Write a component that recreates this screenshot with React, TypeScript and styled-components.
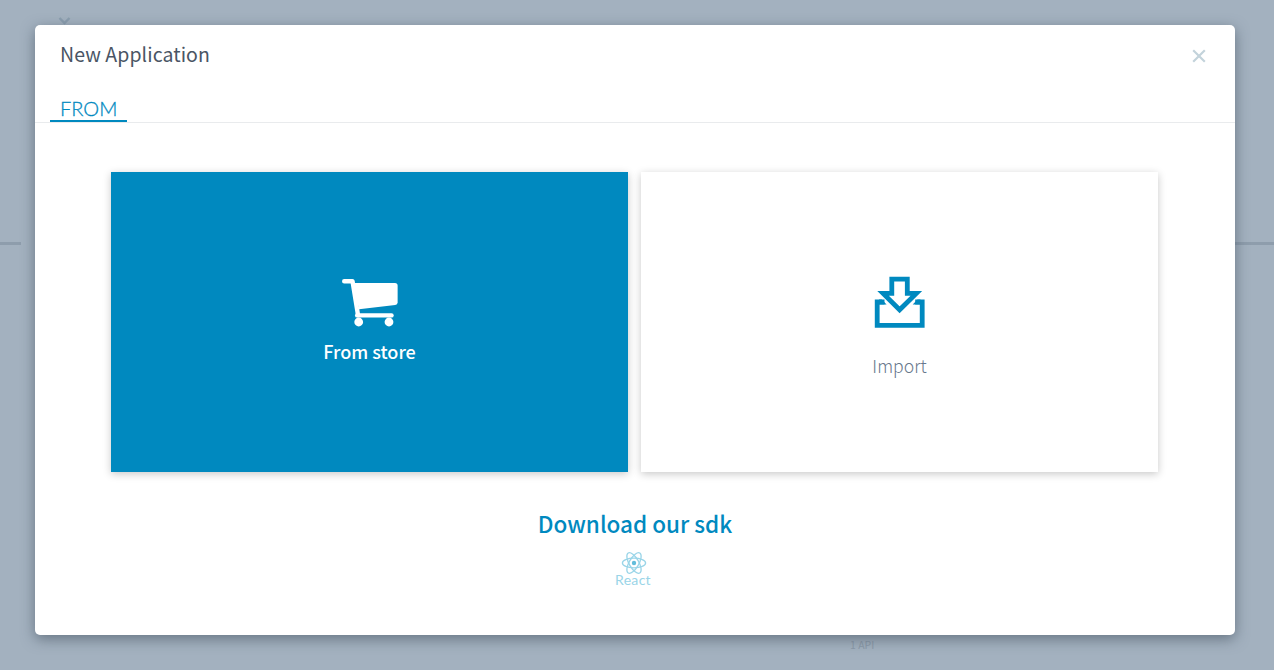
import React from "react";
import styled, { createGlobalStyle } from "styled-components";

const sans = `"Noto Sans CJK SC", "Noto Sans", sans-serif`;
const blue = "#0089bf";

const GlobalStyle = createGlobalStyle`
  *, *::before, *::after { box-sizing: border-box; }
  body { margin: 0; background: #a3b1bf; font-family: ${sans}; }
`;

const Page = styled.div`
  height: 670px;
  overflow: hidden;
  position: relative;
  display: flex;
  flex-direction: column;
`;

const PageHeader = styled.div`
  height: 242px;
  padding: 16px 0 0 58px;
  svg { display: block; }
`;

const Divider = styled.div`
  height: 3px;
  flex: none;
  background: linear-gradient(90deg, #8e9dac 21px, transparent 21px, transparent 1235px, #8e9dac 1235px);
`;

const PageFooter = styled.div`
  margin-top: auto;
  padding: 0 0 18px 850px;
  font-size: 10.5px;
  line-height: 14px;
  color: #8b99a8;
`;

const Overlay = styled.div`
  position: absolute;
  inset: 0;
  padding: 25px 39px 35px 35px;
`;

const Modal = styled.section`
  height: 610px;
  display: flex;
  flex-direction: column;
  background: #fff;
  border-radius: 5px;
  box-shadow: 0 4px 14px rgba(70, 84, 98, 0.65);
`;

const Header = styled.header`
  height: 73px;
  display: flex;
  justify-content: space-between;
  align-items: flex-start;
  padding: 14px 29px 0 25px;
`;

const Title = styled.h1`
  margin: 0;
  font-size: 19.5px;
  line-height: 30px;
  font-weight: 400;
  letter-spacing: 0.08px;
  color: #4a5564;
`;

const CloseButton = styled.button`
  margin-top: 10px;
  width: 14px;
  height: 14px;
  padding: 0;
  border: 0;
  background: none;
  svg { display: block; }
`;

const Tabs = styled.nav`
  height: 25px;
  padding-left: 15px;
  border-bottom: 1px solid #e9ebed;
`;

const Tab = styled.div`
  width: 77px;
  height: 24px;
  padding-left: 10px;
  border-bottom: 2px solid ${blue};
  color: ${blue};
  font-family: Lato, sans-serif;
  font-weight: 300;
  font-size: 20px;
  line-height: 20px;
  -webkit-text-stroke: 0.3px ${blue};
`;

const Choices = styled.div`
  display: flex;
  gap: 13px;
  padding: 49px 77px 0 76px;
`;

const Card = styled.div<{ $active?: boolean }>`
  flex: 1;
  height: 300px;
  display: flex;
  flex-direction: column;
  align-items: center;
  padding-top: ${(p) => (p.$active ? 106 : 104)}px;
  background: ${(p) => (p.$active ? blue : "#fff")};
  box-shadow: 0 2px 8px rgba(0, 0, 0, 0.22);
  svg { display: block; flex: none; }
`;

const CardLabel = styled.span<{ $active?: boolean }>`
  margin-top: ${(p) => (p.$active ? 9 : 22)}px;
  font-size: ${(p) => (p.$active ? 18 : 17.6)}px;
  line-height: 28px;
  font-weight: ${(p) => (p.$active ? 500 : 300)};
  color: ${(p) => (p.$active ? "#fff" : "#68788c")};
`;

const Sdk = styled.div`
  display: flex;
  flex-direction: column;
  align-items: center;
`;

const SdkTitle = styled.h2`
  margin: 32px 0 0;
  font-size: 22.5px;
  line-height: 38px;
  font-weight: 500;
  color: ${blue};
`;

const SdkItem = styled.div`
  margin-top: 9px;
  display: flex;
  flex-direction: column;
  align-items: center;
  margin-right: 4px;
  color: #9ad5e8;
  svg { display: block; margin-left: 2px; }
`;

const SdkName = styled.span`
  margin-top: -2px;
  font-family: Lato, sans-serif;
  font-size: 14px;
  line-height: 14px;
  letter-spacing: 0.3px;
`;

const CartIcon = () => (
  <svg width="58" height="50" viewBox="0 0 58 50" fill="none">
    <path d="M3.200 3.200H11.500L17 37" stroke="#fff" strokeWidth="4.400" strokeLinecap="round" strokeLinejoin="round" />
    <path d="M12 5H54q2.600 0 2.600 2.600V24.500q0 2.200-2.400 2.600L18 31.200Z" fill="#fff" />
    <path d="M16.200 37.400H50.500" stroke="#fff" strokeWidth="4.400" strokeLinecap="round" />
    <circle cx="17.700" cy="44" r="4.400" fill="#fff" />
    <circle cx="48" cy="44" r="4.400" fill="#fff" />
  </svg>
);

const ImportIcon = () => (
  <svg width="52" height="54" viewBox="0 0 52 54" fill="none" stroke={blue} strokeWidth="4.800">
    <path d="M17.800 3.200H33.300V17.400H42.300L25.600 33.800L9.100 17.400H17.800Z" />
    <path d="M10.500 26H3.200V49.300H48.200V26H41.200" />
    <path d="M5 23.600H7.800L12.600 28.400H5ZM46.500 23.600H43.500L38.700 28.400H46.500Z" fill={blue} stroke="none" />
  </svg>
);

const CloseIcon = () => (
  <svg width="14" height="14" viewBox="0 0 14 14" stroke="#c3d3db" strokeWidth="2.200">
    <path d="M1.200 1.200L12.800 12.800M12.800 1.200L1.200 12.800" />
  </svg>
);

const ChevronIcon = () => (
  <svg width="13" height="9" viewBox="0 0 13 9" fill="none" stroke="#8a9dae" strokeWidth="2.400">
    <path d="M1.500 2L6.500 7L11.500 2" />
  </svg>
);

const ReactLogo = () => (
  <svg width="26" height="24" viewBox="0 0 26 24" fill="none" stroke="currentColor" strokeWidth="1.300">
    <ellipse cx="13" cy="12" rx="11.600" ry="4.800" />
    <ellipse cx="13" cy="12" rx="11.600" ry="4.800" transform="rotate(60 13 12)" />
    <ellipse cx="13" cy="12" rx="11.600" ry="4.800" transform="rotate(120 13 12)" />
    <circle cx="13" cy="12" r="2.200" fill="#62bddb" stroke="none" />
  </svg>
);

export default function App() {
  return (
    <Page>
      <GlobalStyle />
      <PageHeader><ChevronIcon /></PageHeader>
      <Divider />
      <PageFooter>1 API</PageFooter>
      <Overlay>
        <Modal role="dialog" aria-labelledby="dialog-title">
          <Header>
            <Title id="dialog-title">New Application</Title>
            <CloseButton aria-label="Close"><CloseIcon /></CloseButton>
          </Header>
          <Tabs><Tab>FROM</Tab></Tabs>
          <Choices>
            <Card $active>
              <CartIcon />
              <CardLabel $active>From store</CardLabel>
            </Card>
            <Card>
              <ImportIcon />
              <CardLabel>Import</CardLabel>
            </Card>
          </Choices>
          <Sdk>
            <SdkTitle>Download our sdk</SdkTitle>
            <SdkItem>
              <ReactLogo />
              <SdkName>React</SdkName>
            </SdkItem>
          </Sdk>
        </Modal>
      </Overlay>
    </Page>
  );
}
